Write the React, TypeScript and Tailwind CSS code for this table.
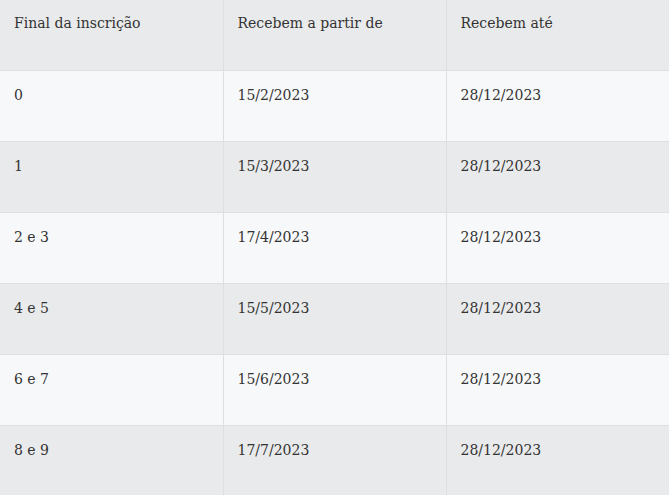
const rows = [
  ["0", "15/2/2023", "28/12/2023"],
  ["1", "15/3/2023", "28/12/2023"],
  ["2 e 3", "17/4/2023", "28/12/2023"],
  ["4 e 5", "15/5/2023", "28/12/2023"],
  ["6 e 7", "15/6/2023", "28/12/2023"],
  ["8 e 9", "17/7/2023", "28/12/2023"],
]

export default function App() {
  return (
    <div className="w-[669px] h-[495px] overflow-hidden bg-white font-['DejaVu_Serif',serif] text-[14px] leading-[24px] text-[#333]">
      <table className="w-[670px] table-fixed border-collapse">
        <thead>
          <tr className="h-[70px] bg-[#e9eaeb]">
            <th className="w-[223px] border-r border-b border-[#dddfe1] px-[14px] pt-[11px] align-top text-left font-normal">Final da inscrição</th>
            <th className="w-[223px] border-r border-b border-[#dddfe1] px-[14px] pt-[11px] align-top text-left font-normal">Recebem a partir de</th>
            <th className="border-b border-[#dddfe1] px-[14px] pt-[11px] align-top text-left font-normal">Recebem até</th>
          </tr>
        </thead>
        <tbody>
          {rows.map((r, i) => (
            <tr key={i} className={`h-[71px] ${i % 2 === 0 ? "bg-[#f7f8f9]" : "bg-[#e9eaeb]"}`}>
              {r.map((c, j) => (
                <td
                  key={j}
                  className={`${j < 2 ? "border-r" : ""} border-b border-[#dddfe1] px-[14px] pt-[12px] align-top`}
                >
                  {c}
                </td>
              ))}
            </tr>
          ))}
        </tbody>
      </table>
    </div>
  )
}
